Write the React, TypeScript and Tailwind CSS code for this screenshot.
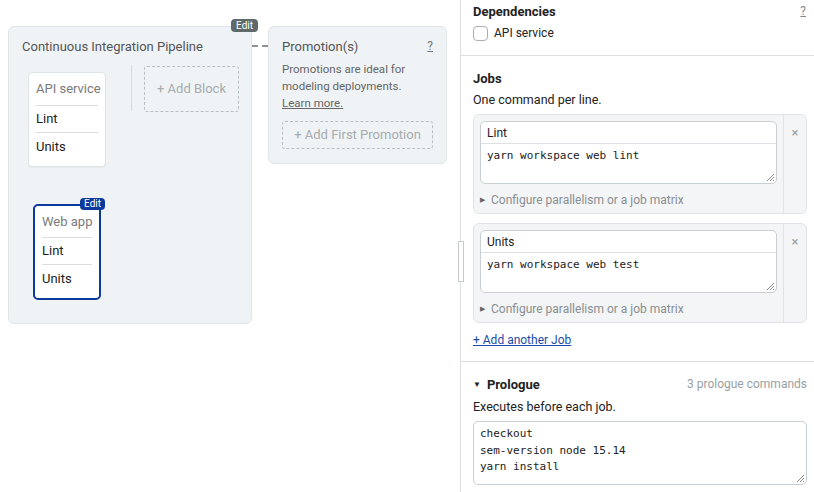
import React from 'react';

const sans = { fontFamily: 'Roboto, "Liberation Sans", Arial, sans-serif' };

function Block({ title, jobs, active }: { title: string; jobs: string[]; active?: boolean }) {
  return (
    <div
      className={
        active
          ? 'relative w-[68px] rounded-[5px] border-2 border-[#0c3a9c] bg-white px-[7px] pb-[6px]'
          : 'relative w-[78px] rounded-[4px] border border-[#dfe4e6] bg-white px-[7px] pb-[6px] shadow-[0_1px_1px_rgba(0,0,0,0.04)]'
      }
    >
      {active && (
        <span className="absolute right-[-6px] top-[-8px] rounded-[4px] bg-[#0c3a9c] px-[4px] text-[10px] leading-[12px] text-white">
          Edit
        </span>
      )}
      <div
        className={
          'flex items-center whitespace-nowrap border-b border-[#dcdcdc] text-[13px] text-[#7a7a7a] ' +
          (active ? 'h-[32px]' : 'h-[33px]')
        }
      >
        {title}
      </div>
      {jobs.map((j, i) => (
        <div
          key={j}
          className={
            'flex h-[27px] items-center whitespace-nowrap text-[13px] text-[#222] ' +
            (i < jobs.length - 1 ? 'border-b border-[#dcdcdc]' : '')
          }
        >
          {j}
        </div>
      ))}
    </div>
  );
}

function ResizeGrip() {
  return (
    <svg className="absolute bottom-[1px] right-[1px]" width="9" height="9" viewBox="0 0 9 9">
      <path d="M8 1L1 8M8 4L4 8M8 7L7 8" stroke="#888" strokeWidth="1" />
    </svg>
  );
}

function JobCard({ name, command }: { name: string; command: string }) {
  return (
    <div className="flex rounded-[6px] border border-[#dfe3e5] bg-[#f3f5f6]">
      <div className="flex-1 px-[6px] pt-[6px] pb-[5px]">
        <div className="overflow-hidden rounded-[5px] border border-[#c9cfd2] bg-white">
          <div className="flex h-[22px] items-center border-b border-[#dde1e3] px-[6px] text-[12px] text-[#222]">
            {name}
          </div>
          <div
            className="relative h-[39px] px-[6px] pt-[4px] text-[11px] leading-[16px] text-[#222]"
            style={{ fontFamily: '"DejaVu Sans Mono", monospace' }}
          >
            {command}
            <ResizeGrip />
          </div>
        </div>
        <div className="mt-[8px] flex h-[16px] items-center text-[12px] text-[#8a8f91]">
          <span className="mr-[6px] text-[7px] text-[#666]">▶</span>
          Configure parallelism or a job matrix
        </div>
      </div>
      <div className="flex w-[23px] justify-center border-l border-[#dfe3e5] pt-[11px] text-[13px] leading-[14px] text-[#9aa0a2]">
        ×
      </div>
    </div>
  );
}

export default function App() {
  return (
    <div className="flex h-[492px] w-[814px] overflow-hidden bg-white" style={sans}>
      {/* Canvas */}
      <div className="relative w-[461px] shrink-0 border-r border-[#dcdfe0]">
        <div className="flex items-start pl-[8px] pt-[26px]">
          {/* Pipeline */}
          <div className="relative h-[298px] w-[244px] rounded-[6px] border border-[#e0e5e7] bg-[#eff3f5]">
            <span className="absolute right-[-7px] top-[-8px] rounded-[4px] bg-[#5e6a6a] px-[5px] text-[10px] leading-[13px] text-white">
              Edit
            </span>
            <div className="px-[13px] pt-[10px] text-[13px] leading-[19px] text-[#555]">
              Continuous Integration Pipeline
            </div>
            <div className="flex items-start pl-[19px] pt-[16px]">
              <Block title="API service" jobs={['Lint', 'Units']} />
              <div className="ml-[25px] mt-[-7px] h-[46px] w-px bg-[#d8dcdd]" />
              <div className="ml-[12px] mt-[-6px] flex h-[46px] w-[95px] items-center justify-center rounded-[3px] border border-dashed border-[#b9bfc2] text-[13px] text-[#a7acae]">
                + Add Block
              </div>
            </div>
            <div className="pl-[24px] pt-[37px]">
              <Block title="Web app" jobs={['Lint', 'Units']} active />
            </div>
          </div>
          {/* connector */}
          <div className="mt-[19px] w-[16px] border-t-2 border-dashed border-[#8e9597]" />
          {/* Promotions */}
          <div className="h-[138px] w-[179px] rounded-[6px] border border-[#e0e5e7] bg-[#eff3f5] px-[13px] pt-[10px]">
            <div className="flex items-center justify-between text-[13px] leading-[19px] text-[#555]">
              <span>Promotion(s)</span>
              <span className="text-[12px] text-[#777] underline">?</span>
            </div>
            <div className="mt-[5px] text-[11.5px] leading-[17px] text-[#666]">
              Promotions are ideal for
              <br />
              modeling deployments.
              <br />
              <span className="underline">Learn more.</span>
            </div>
            <div className="mt-[9px] flex h-[28px] items-center justify-center rounded-[3px] border border-dashed border-[#b9bfc2] text-[13px] text-[#a7acae]">
              + Add First Promotion
            </div>
          </div>
        </div>
        {/* splitter handle */}
        <div className="absolute right-[-4px] top-[241px] h-[41px] w-[6px] border border-[#c6cacc] bg-white" />
      </div>

      {/* Sidebar */}
      <div className="flex-1 text-[#222]">
        <div className="border-b border-[#dcdfe0] pl-[12px] pr-[8px]">
          <div className="mt-[3px] flex items-center justify-between text-[13px] leading-[17px]">
            <span className="font-bold">Dependencies</span>
            <span className="text-[12px] font-normal text-[#888] underline">?</span>
          </div>
          <div className="mt-[5px] flex h-[16px] items-center text-[12px]">
            <span className="mr-[6px] h-[15px] w-[15px] rounded-[4px] border border-[#a9aeb0] bg-white" />
            API service
          </div>
          <div className="h-[14px]" />
        </div>

        <div className="border-b border-[#dcdfe0] pl-[12px] pr-[7px] pt-[14px] pb-[13px]">
          <div className="text-[13px] font-bold leading-[17px]">Jobs</div>
          <div className="mt-[4px] text-[12.5px] leading-[17px]">One command per line.</div>
          <div className="mt-[6px] flex flex-col gap-[9px]">
            <JobCard name="Lint" command="yarn workspace web lint" />
            <JobCard name="Units" command="yarn workspace web test" />
          </div>
          <div className="mt-[9px] text-[12px] leading-[16px] text-[#1c4ba8] underline">+ Add another Job</div>
        </div>

        <div className="pl-[12px] pr-[7px] pt-[14px]">
          <div className="flex items-center justify-between text-[13px] leading-[17px]">
            <span className="flex items-center font-bold">
              <span className="mr-[6px] text-[8px]">▼</span>Prologue
            </span>
            <span className="text-[12px] text-[#9a9fa1]">3 prologue commands</span>
          </div>
          <div className="mt-[5px] text-[12.5px] leading-[17px]">Executes before each job.</div>
          <div
            className="relative mt-[6px] h-[64px] rounded-[5px] border border-[#c9cfd2] px-[6px] pt-[4px] text-[11px] leading-[16.5px]"
            style={{ fontFamily: '"DejaVu Sans Mono", monospace' }}
          >
            checkout
            <br />
            sem-version node 15.14
            <br />
            yarn install
            <ResizeGrip />
          </div>
        </div>
      </div>
    </div>
  );
}
